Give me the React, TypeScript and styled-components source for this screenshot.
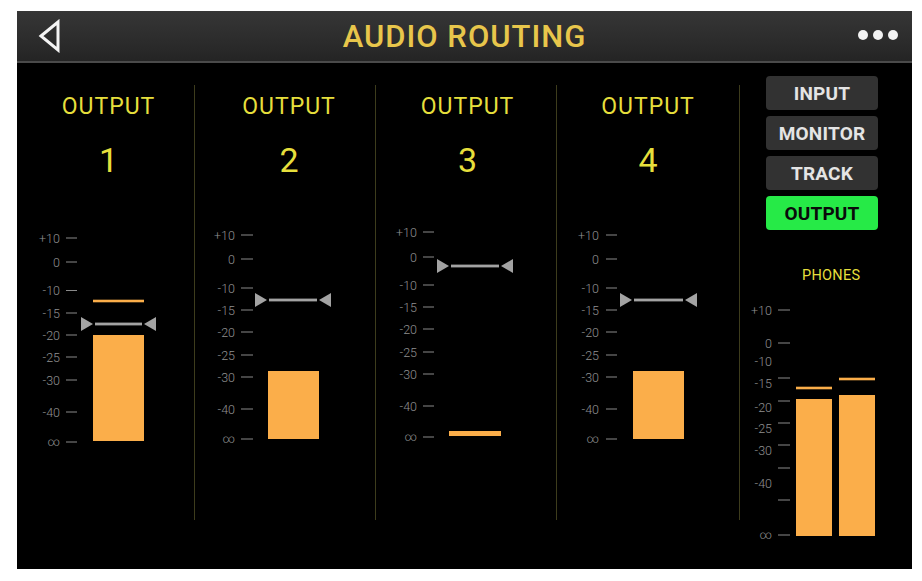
import React from "react";
import styled, { createGlobalStyle } from "styled-components";

const Global = createGlobalStyle`
  html, body { margin: 0; padding: 0; background: #ffffff; }
  body { font-family: Roboto, "Liberation Sans", sans-serif; }
`;

const Page = styled.div`
  padding: 11px 0 0 17px;
`;

const Screen = styled.div`
  width: 895px;
  height: 558px;
  background: #000;
  display: flex;
  flex-direction: column;
  overflow: hidden;
`;

const Header = styled.header`
  height: 50px;
  flex-shrink: 0;
  background: linear-gradient(#363636, #2a2a2a 70%, #242424);
  border-bottom: 2px solid #4a4a4a;
  display: grid;
  grid-template-columns: 80px 1fr 80px;
  align-items: center;
`;

const BackButton = styled.div`
  display: flex;
  align-items: center;
  padding-left: 21px;
  height: 100%;
`;

const Title = styled.h1`
  margin: 0;
  padding-top: 2px;
  text-align: center;
  font-family: Roboto, "Liberation Sans", sans-serif;
  font-weight: 500;
  font-size: 31px;
  letter-spacing: 1px;
  line-height: 48px;
  color: #e8c64b;
`;

const MoreDots = styled.div`
  display: flex;
  gap: 5px;
  justify-content: flex-end;
  padding-right: 14px;
  margin-top: -2px;
`;

const Dot = styled.span`
  width: 10px;
  height: 10px;
  border-radius: 50%;
  background: #f2f2f2;
`;

const Main = styled.div`
  flex: 1;
  display: flex;
  align-items: flex-start;
`;

const Channel = styled.section<{ $w: number }>`
  width: ${(p) => p.$w}px;
  flex-shrink: 0;
  padding-top: 24px;
  display: flex;
  flex-direction: column;
  align-items: center;
`;

const ChannelTitle = styled.div<{ $shift: number }>`
  font-size: 23px;
  letter-spacing: 1px;
  line-height: 40px;
  color: #e6df3c;
  padding-left: ${(p) => p.$shift}px;
`;

const ChannelNumber = styled.div<{ $shift: number }>`
  margin-top: 13px;
  font-size: 34px;
  line-height: 40px;
  color: #e6df3c;
  padding-left: ${(p) => p.$shift}px;
`;

const MeterBox = styled.div<{ $top: number; $left?: number }>`
  flex-shrink: 0;
  margin-top: ${(p) => p.$top}px;
  margin-left: ${(p) => p.$left ?? 0}px;
`;

const Divider = styled.div`
  width: 1px;
  height: 435px;
  margin-top: 22px;
  flex-shrink: 0;
  background: #3d3c1c;
`;

const SideColumn = styled.aside`
  flex: 1;
  padding: 13px 0 0 26px;
  display: flex;
  flex-direction: column;
`;

const ModeList = styled.div`
  display: flex;
  flex-direction: column;
  gap: 6px;
  width: 112px;
`;

const ModeButton = styled.button<{ $active?: boolean }>`
  height: 34px;
  border: none;
  border-radius: 4px;
  padding: 0;
  font-family: Roboto, "Liberation Sans", sans-serif;
  font-weight: 700;
  font-size: 19px;
  letter-spacing: 0.2px;
  background: ${(p) => (p.$active ? "#26ea47" : "#323232")};
  color: ${(p) => (p.$active ? "#0a0a0a" : "#e4e4e4")};
`;

const PhonesLabel = styled.div`
  margin-top: 36px;
  padding-left: 36px;
  font-size: 14.5px;
  line-height: 20px;
  color: #e6df3c;
  letter-spacing: 0.3px;
`;

const LABELS = ["+10", "0", "-10", "-15", "-20", "-25", "-30", "-40", "∞"];
const BAR = "#fbae4a";
const FADER = "#a3a3a3";

type Bar = { x: number; w: number; top: number; bottom: number; peak?: number };

type MeterProps = {
  left: number;
  top: number;
  width: number;
  height: number;
  labelYs: number[];
  tickYs: number[];
  labelX: number;
  tickX: [number, number];
  bars: Bar[];
  fader?: { y: number; l: number; r: number };
};

function Meter({ left, top, width, height, labelYs, tickYs, labelX, tickX, bars, fader }: MeterProps) {
  return (
    <svg width={width} height={height} viewBox={`${left} ${top} ${width} ${height}`} style={{ display: "block", overflow: "visible" }}>
      {LABELS.map((l, i) => (
        <text
          key={l}
          x={labelX}
          y={labelYs[i]}
          textAnchor="end"
          dominantBaseline="central"
          fontFamily="Roboto, 'Liberation Sans', sans-serif"
          fontWeight={300}
          fontSize={l === "∞" ? 12 : 12.5}
          fill="#909090"
        >
          {l}
        </text>
      ))}
      {tickYs.map((y, i) => (
        <rect key={i} x={tickX[0]} y={y - 0.5} width={tickX[1] - tickX[0]} height={1} fill="#8a8a8a" />
      ))}
      {bars.map((b, i) => (
        <g key={i}>
          <rect x={b.x} y={b.top} width={b.w} height={b.bottom - b.top} fill={BAR} />
          {b.peak !== undefined && <rect x={b.x} y={b.peak - 1.3} width={b.w} height={2.6} fill={BAR} />}
        </g>
      ))}
      {fader && (
        <g fill={FADER}>
          <polygon points={`${fader.l},${fader.y - 7} ${fader.l},${fader.y + 7} ${fader.l + 12},${fader.y}`} />
          <polygon points={`${fader.r},${fader.y - 7} ${fader.r},${fader.y + 7} ${fader.r - 12},${fader.y}`} />
          <rect x={fader.l + 14} y={fader.y - 1.4} width={fader.r - fader.l - 28} height={2.8} />
        </g>
      )}
    </svg>
  );
}

const Y2 = [236, 260, 289, 311, 333, 356, 378, 410, 440];

const channels = [
  {
    n: 1, left: 17, w: 177, shift: 6,
    ys: [239, 263, 291.5, 314, 336, 358, 381, 413, 443],
    labelX: 60, tickX: [66, 77] as [number, number],
    bars: [{ x: 93, w: 51, top: 336, bottom: 442, peak: 302 }],
    fader: { y: 325, l: 81, r: 156 },
  },
  {
    n: 2, left: 195, w: 180, shift: 8,
    ys: Y2, labelX: 235, tickX: [241, 253] as [number, number],
    bars: [{ x: 268, w: 51, top: 372, bottom: 440 }],
    fader: { y: 301, l: 255, r: 331 },
  },
  {
    n: 3, left: 376, w: 180, shift: 3,
    ys: [233, 258, 286, 308, 330, 353, 375, 407, 438],
    labelX: 417, tickX: [423, 434] as [number, number],
    bars: [{ x: 449, w: 52, top: 432, bottom: 437 }],
    fader: { y: 267, l: 437, r: 513 },
  },
  {
    n: 4, left: 557, w: 182, shift: 0,
    ys: Y2, labelX: 599, tickX: [606, 617] as [number, number],
    bars: [{ x: 633, w: 51, top: 372, bottom: 440 }],
    fader: { y: 301, l: 620, r: 697 },
  },
];

const modes = ["INPUT", "MONITOR", "TRACK", "OUTPUT"];

export default function App() {
  return (
    <>
      <Global />
      <Page>
        <Screen>
          <Header>
            <BackButton>
              <svg width="24" height="34" viewBox="0 0 24 34">
                <polygon points="3,17 20,3 20,31" fill="none" stroke="#f4f4f4" strokeWidth="3" strokeLinejoin="miter" />
              </svg>
            </BackButton>
            <Title>AUDIO ROUTING</Title>
            <MoreDots>
              <Dot />
              <Dot />
              <Dot />
            </MoreDots>
          </Header>
          <Main>
            {channels.map((c) => (
              <React.Fragment key={c.n}>
                <Channel $w={c.w}>
                  <ChannelTitle $shift={c.shift}>OUTPUT</ChannelTitle>
                  <ChannelNumber $shift={c.shift}>{c.n}</ChannelNumber>
                  <MeterBox $top={39}>
                    <Meter
                      left={c.left}
                      top={220}
                      width={c.w}
                      height={240}
                      labelYs={c.ys}
                      tickYs={c.ys}
                      labelX={c.labelX}
                      tickX={c.tickX}
                      bars={c.bars}
                      fader={c.fader}
                    />
                  </MeterBox>
                </Channel>
                <Divider />
              </React.Fragment>
            ))}
            <SideColumn>
              <ModeList>
                {modes.map((m) => (
                  <ModeButton key={m} $active={m === "OUTPUT"}>
                    {m}
                  </ModeButton>
                ))}
              </ModeList>
              <PhonesLabel>PHONES</PhonesLabel>
              <MeterBox $top={3} $left={-26}>
                <Meter
                  left={740}
                  top={290}
                  width={172}
                  height={260}
                  labelYs={[311, 344, 362, 384, 408, 429, 451, 484, 536]}
                  tickYs={[311, 344, 379, 402, 424, 446, 469, 501, 536]}
                  labelX={772}
                  tickX={[778, 790]}
                  bars={[
                    { x: 796, w: 36, top: 400, bottom: 537, peak: 389 },
                    { x: 839, w: 36, top: 396, bottom: 537, peak: 380 },
                  ]}
                />
              </MeterBox>
            </SideColumn>
          </Main>
        </Screen>
      </Page>
    </>
  );
}
